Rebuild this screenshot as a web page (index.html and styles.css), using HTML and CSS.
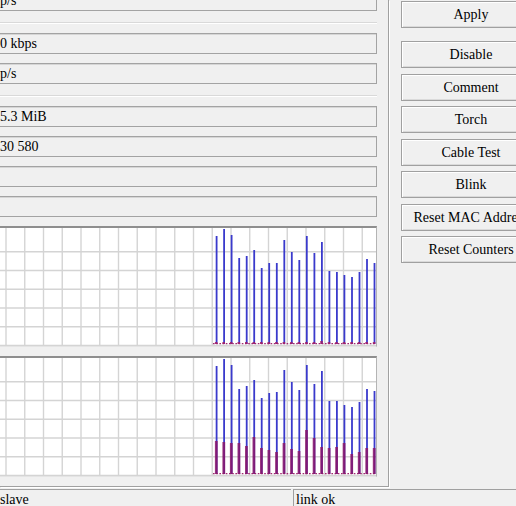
FILE: index.html
```html
<!DOCTYPE html>
<html>
<head>
<meta charset="utf-8">
<link rel="stylesheet" href="styles.css">
</head>
<body>
<div class="window">
  <div class="main">
    <div class="panel">
      <div class="field first">p/s</div>
      <div class="sep"></div>
      <div class="field">0 kbps</div>
      <div class="field">p/s</div>
      <div class="sep"></div>
      <div class="field">5.3 MiB</div>
      <div class="field">30 580</div>
      <div class="field"></div>
      <div class="field"></div>
      <div class="graph">
        <svg viewBox="-9 228 385 118" preserveAspectRatio="none">
          <g class="grid">
            <line x1="-12.75" y1="228" x2="-12.75" y2="346"/><line x1="6" y1="228" x2="6" y2="346"/><line x1="24.75" y1="228" x2="24.75" y2="346"/><line x1="43.5" y1="228" x2="43.5" y2="346"/><line x1="62.25" y1="228" x2="62.25" y2="346"/><line x1="81" y1="228" x2="81" y2="346"/><line x1="99.75" y1="228" x2="99.75" y2="346"/><line x1="118.5" y1="228" x2="118.5" y2="346"/><line x1="137.25" y1="228" x2="137.25" y2="346"/><line x1="156" y1="228" x2="156" y2="346"/><line x1="174.75" y1="228" x2="174.75" y2="346"/><line x1="193.5" y1="228" x2="193.5" y2="346"/><line x1="212.25" y1="228" x2="212.25" y2="346"/><line x1="231" y1="228" x2="231" y2="346"/><line x1="249.75" y1="228" x2="249.75" y2="346"/><line x1="268.5" y1="228" x2="268.5" y2="346"/><line x1="287.25" y1="228" x2="287.25" y2="346"/><line x1="306" y1="228" x2="306" y2="346"/><line x1="324.75" y1="228" x2="324.75" y2="346"/><line x1="343.5" y1="228" x2="343.5" y2="346"/><line x1="362.25" y1="228" x2="362.25" y2="346"/>
            <line x1="-9" y1="251.75" x2="376" y2="251.75"/><line x1="-9" y1="270.5" x2="376" y2="270.5"/><line x1="-9" y1="289.25" x2="376" y2="289.25"/><line x1="-9" y1="308" x2="376" y2="308"/><line x1="-9" y1="326.75" x2="376" y2="326.75"/><line x1="-9" y1="345.5" x2="376" y2="345.5"/>
          </g>
          <g class="tx">
            <rect x="215.7" y="236" width="1.8" height="108"/><rect x="223.2" y="229" width="1.8" height="115"/><rect x="230.7" y="235" width="1.8" height="109"/><rect x="238.3" y="258" width="1.8" height="86"/><rect x="245.8" y="256" width="1.8" height="88"/><rect x="253.3" y="250" width="1.8" height="94"/><rect x="260.8" y="268" width="1.8" height="76"/><rect x="268.3" y="263" width="1.8" height="81"/><rect x="275.9" y="263" width="1.8" height="81"/><rect x="283.4" y="240" width="1.8" height="104"/><rect x="290.9" y="252" width="1.8" height="92"/><rect x="298.4" y="260" width="1.8" height="84"/><rect x="305.9" y="236" width="1.8" height="108"/><rect x="313.5" y="253" width="1.8" height="91"/><rect x="321" y="242" width="1.8" height="102"/><rect x="328.5" y="271" width="1.8" height="73"/><rect x="336" y="272" width="1.8" height="72"/><rect x="343.5" y="275" width="1.8" height="69"/><rect x="351.1" y="277" width="1.8" height="67"/><rect x="358.6" y="272" width="1.8" height="72"/><rect x="366.1" y="259" width="1.8" height="85"/><rect x="373.6" y="263" width="1.8" height="81"/>
          </g>
          <line class="base" x1="213" y1="343.6" x2="376" y2="343.6"/>
          <g class="rx">
            <rect x="214.9" y="342" width="2.6" height="2"/><rect x="222.4" y="342" width="2.6" height="2"/><rect x="229.9" y="342" width="2.6" height="2"/><rect x="237.5" y="342" width="2.6" height="2"/><rect x="245" y="342" width="2.6" height="2"/><rect x="252.5" y="342" width="2.6" height="2"/><rect x="260" y="342" width="2.6" height="2"/><rect x="267.5" y="342" width="2.6" height="2"/><rect x="275.1" y="342" width="2.6" height="2"/><rect x="282.6" y="342" width="2.6" height="2"/><rect x="290.1" y="342" width="2.6" height="2"/><rect x="297.6" y="342" width="2.6" height="2"/><rect x="305.1" y="342" width="2.6" height="2"/><rect x="312.7" y="342" width="2.6" height="2"/><rect x="320.2" y="341" width="2.6" height="3"/><rect x="327.7" y="342" width="2.6" height="2"/><rect x="335.2" y="342" width="2.6" height="2"/><rect x="342.7" y="342" width="2.6" height="2"/><rect x="350.3" y="342" width="2.6" height="2"/><rect x="357.8" y="342" width="2.6" height="2"/><rect x="365.3" y="342" width="2.6" height="2"/><rect x="372.8" y="342" width="2.6" height="2"/>
          </g>
        </svg>
      </div>
      <div class="graph">
        <svg viewBox="-9 358 385 118" preserveAspectRatio="none">
          <g class="grid">
            <line x1="-12.75" y1="358" x2="-12.75" y2="476"/><line x1="6" y1="358" x2="6" y2="476"/><line x1="24.75" y1="358" x2="24.75" y2="476"/><line x1="43.5" y1="358" x2="43.5" y2="476"/><line x1="62.25" y1="358" x2="62.25" y2="476"/><line x1="81" y1="358" x2="81" y2="476"/><line x1="99.75" y1="358" x2="99.75" y2="476"/><line x1="118.5" y1="358" x2="118.5" y2="476"/><line x1="137.25" y1="358" x2="137.25" y2="476"/><line x1="156" y1="358" x2="156" y2="476"/><line x1="174.75" y1="358" x2="174.75" y2="476"/><line x1="193.5" y1="358" x2="193.5" y2="476"/><line x1="212.25" y1="358" x2="212.25" y2="476"/><line x1="231" y1="358" x2="231" y2="476"/><line x1="249.75" y1="358" x2="249.75" y2="476"/><line x1="268.5" y1="358" x2="268.5" y2="476"/><line x1="287.25" y1="358" x2="287.25" y2="476"/><line x1="306" y1="358" x2="306" y2="476"/><line x1="324.75" y1="358" x2="324.75" y2="476"/><line x1="343.5" y1="358" x2="343.5" y2="476"/><line x1="362.25" y1="358" x2="362.25" y2="476"/>
            <line x1="-9" y1="381.75" x2="376" y2="381.75"/><line x1="-9" y1="400.5" x2="376" y2="400.5"/><line x1="-9" y1="419.25" x2="376" y2="419.25"/><line x1="-9" y1="438" x2="376" y2="438"/><line x1="-9" y1="456.75" x2="376" y2="456.75"/><line x1="-9" y1="475.5" x2="376" y2="475.5"/>
          </g>
          <g class="tx">
            <rect x="215.7" y="366" width="1.8" height="108"/><rect x="223.2" y="359" width="1.8" height="115"/><rect x="230.7" y="365" width="1.8" height="109"/><rect x="238.3" y="389" width="1.8" height="85"/><rect x="245.8" y="386" width="1.8" height="88"/><rect x="253.3" y="380" width="1.8" height="94"/><rect x="260.8" y="398" width="1.8" height="76"/><rect x="268.3" y="393" width="1.8" height="81"/><rect x="275.9" y="392" width="1.8" height="82"/><rect x="283.4" y="370" width="1.8" height="104"/><rect x="290.9" y="382" width="1.8" height="92"/><rect x="298.4" y="390" width="1.8" height="84"/><rect x="305.9" y="365" width="1.8" height="109"/><rect x="313.5" y="384" width="1.8" height="90"/><rect x="321" y="371" width="1.8" height="103"/><rect x="328.5" y="401" width="1.8" height="73"/><rect x="336" y="401" width="1.8" height="73"/><rect x="343.5" y="405" width="1.8" height="69"/><rect x="351.1" y="407" width="1.8" height="67"/><rect x="358.6" y="402" width="1.8" height="72"/><rect x="366.1" y="389" width="1.8" height="85"/><rect x="373.6" y="391" width="1.8" height="83"/>
          </g>
          <line class="base" x1="213" y1="473.6" x2="376" y2="473.6"/>
          <g class="rx big">
            <rect x="214.9" y="441" width="2.8" height="33"/><rect x="222.4" y="442" width="2.8" height="32"/><rect x="229.9" y="443" width="2.8" height="31"/><rect x="237.5" y="443" width="2.8" height="31"/><rect x="245" y="446" width="2.8" height="28"/><rect x="252.5" y="437" width="2.8" height="37"/><rect x="260" y="448" width="2.8" height="26"/><rect x="267.5" y="450" width="2.8" height="24"/><rect x="275.1" y="452" width="2.8" height="22"/><rect x="282.6" y="443" width="2.8" height="31"/><rect x="290.1" y="449" width="2.8" height="25"/><rect x="297.6" y="451" width="2.8" height="23"/><rect x="305.1" y="430" width="2.8" height="44"/><rect x="312.7" y="438" width="2.8" height="36"/><rect x="320.2" y="447" width="2.8" height="27"/><rect x="327.7" y="448" width="2.8" height="26"/><rect x="335.2" y="447" width="2.8" height="27"/><rect x="342.7" y="443" width="2.8" height="31"/><rect x="350.3" y="454" width="2.8" height="20"/><rect x="357.8" y="452" width="2.8" height="22"/><rect x="365.3" y="448" width="2.8" height="26"/><rect x="372.8" y="448" width="2.8" height="26"/>
          </g>
        </svg>
      </div>
    </div>
    <div class="buttons">
      <button class="btn apply">Apply</button>
      <button class="btn">Disable</button>
      <button class="btn">Comment</button>
      <button class="btn">Torch</button>
      <button class="btn">Cable Test</button>
      <button class="btn">Blink</button>
      <button class="btn">Reset MAC Address</button>
      <button class="btn">Reset Counters</button>
    </div>
  </div>
  <div class="status">
    <div class="cell cell-main">slave</div>
    <div class="cell cell-link">link ok</div>
  </div>
</div>
</body>
</html>
```
FILE: styles.css
```css
html, body {
  margin: 0;
  padding: 0;
  background: #f0f0f0;
}

.window {
  width: 516px;
  height: 506px;
  overflow: hidden;
  background: #f0f0f0;
  color: #000;
  font-family: "Liberation Serif", "Times New Roman", serif;
  font-size: 14px;
}

.main {
  display: flex;
  align-items: flex-start;
  height: 487px;
}

.panel {
  flex: 0 0 auto;
  width: 389px;
  height: 487px;
  box-sizing: border-box;
  padding-right: 11px;
  border-right: 1px solid #a0a0a0;
  border-bottom: 1px solid #a0a0a0;
  box-shadow: 1px 1px 0 #ffffff;
  display: flex;
  flex-direction: column;
  gap: 9px;
}

.field {
  flex: 0 0 auto;
  height: 21px;
  box-sizing: border-box;
  margin-left: -10px;
  padding-left: 9px;
  border: 1px solid #a3a3a3;
  box-shadow: inset 0 1px 0 #d6d6d6;
  background: #f0f0f0;
  line-height: 19px;
  white-space: nowrap;
  overflow: hidden;
}

.field.first {
  margin-top: -10px;
}

.sep {
  flex: 0 0 auto;
  height: 2px;
  box-sizing: border-box;
  margin: 2px 0 0 -10px;
  border-top: 1px solid #d9d9d9;
  border-bottom: 1px solid #ffffff;
}

.graph {
  flex: 0 0 auto;
  height: 121px;
  box-sizing: border-box;
  margin-left: -10px;
  border-top: 2px solid #8e8e8e;
  border-left: 1px solid #8e8e8e;
  border-right: 1px solid #b4b4b4;
  border-bottom: 1px solid #e4e4e4;
  background: #ffffff;
}

.graph svg {
  display: block;
  width: 100%;
  height: 100%;
}

.grid line {
  stroke: #d4d4d4;
  stroke-width: 1.4;
}

.tx rect {
  fill: #3a3acc;
}

.rx rect {
  fill: #a01c68;
  opacity: 0.85;
}

.rx.big rect {
  fill: #8c1466;
  opacity: 0.82;
}

.base {
  stroke: #a02a70;
  stroke-width: 1.1;
  stroke-dasharray: 1.6 1.6;
}

.buttons {
  flex: 0 0 auto;
  display: flex;
  flex-direction: column;
  gap: 5.5px;
  margin-left: 12px;
  padding-top: 1px;
}

.btn {
  width: 140px;
  height: 27px;
  box-sizing: border-box;
  margin: 0;
  padding: 0;
  border: 1px solid #a0a0a0;
  background: #f0f0f0;
  box-shadow: inset 1px 1px 0 #ffffff, inset -1px -1px 0 #dadada;
  font-family: "Liberation Serif", "Times New Roman", serif;
  font-size: 14px;
  line-height: 25px;
  color: #000;
  text-align: center;
  white-space: nowrap;
  overflow: hidden;
}

.btn.apply {
  margin-bottom: 7.5px;
}

.status {
  display: flex;
  margin-top: 2px;
}

.cell {
  height: 20px;
  box-sizing: border-box;
  border-top: 1px solid #a0a0a0;
  border-left: 1px solid #a0a0a0;
  line-height: 18px;
  padding-top: 1px;
  white-space: nowrap;
}

.cell-main {
  width: 301px;
  margin-left: -10px;
  padding-left: 9px;
}

.cell-link {
  flex: 1 1 auto;
  margin-left: 2px;
  padding-left: 2px;
}
```
